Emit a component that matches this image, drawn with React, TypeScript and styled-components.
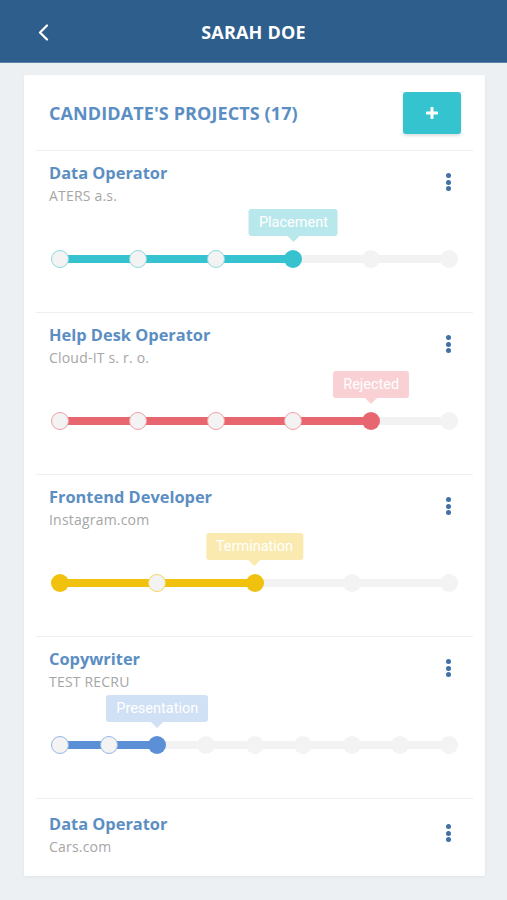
import React from "react";
import styled, { createGlobalStyle } from "styled-components";

const Global = createGlobalStyle`
  html, body { margin: 0; padding: 0; }
  body {
    background: #edf0f3;
    font-family: "Open Sans", "Noto Sans", sans-serif;
    -webkit-font-smoothing: antialiased;
  }
  * { box-sizing: border-box; }
`;

const Page = styled.div`
  min-height: 900px;
  background: #edf0f3;
  display: flex;
  flex-direction: column;
`;

const TopBar = styled.header`
  height: 63px;
  background: #2e5e8b;
  border-bottom: 1px solid #5a83ab;
  display: flex;
  align-items: center;
  justify-content: center;
  position: relative;
`;

const BackButton = styled.button`
  position: absolute;
  left: 30px;
  top: 18px;
  width: 26px;
  height: 28px;
  border: 0;
  background: transparent;
  padding: 0;
  display: flex;
  align-items: center;
  justify-content: center;
  cursor: pointer;
`;

const TopTitle = styled.h1`
  margin: 0;
  color: #ffffff;
  font-size: 18px;
  font-weight: 700;
  letter-spacing: 0.2px;
  line-height: 1;
  padding-top: 2px;
`;

const Card = styled.section`
  margin: 12px 22px 23px 24px;
  background: #ffffff;
  border-radius: 2px;
  box-shadow: 0 1px 3px rgba(40, 60, 90, 0.06);
  display: flex;
  flex-direction: column;
`;

const CardHead = styled.div`
  height: 75px;
  display: flex;
  align-items: center;
  justify-content: space-between;
  padding: 0 24px 0 25px;
`;

const CardTitle = styled.h2`
  margin: 0;
  font-size: 18px;
  font-weight: 700;
  color: #5b8ec2;
  letter-spacing: 0.1px;
  padding-top: 1px;
`;

const AddButton = styled.button`
  width: 58px;
  height: 42px;
  margin-top: 1px;
  border: 0;
  border-radius: 3px;
  background: #35c3cf;
  box-shadow: 0 2px 3px rgba(0, 0, 0, 0.12);
  display: flex;
  align-items: center;
  justify-content: center;
  cursor: pointer;
`;

const Item = styled.article<{ $last?: boolean }>`
  margin: 0 12px;
  border-top: 1px solid #eeeff1;
  padding: ${(p) => (p.$last ? "15px 0 20px 13px" : "12px 0 44px 13px")};
  display: flex;
  flex-direction: column;
`;

const ItemHead = styled.div`
  display: flex;
  align-items: center;
  justify-content: space-between;
`;

const ItemText = styled.div`
  display: flex;
  flex-direction: column;
`;

const ItemTitle = styled.div`
  font-size: 16.4px;
  font-weight: 700;
  line-height: 20px;
  color: #5b8ec2;
`;

const ItemSub = styled.div`
  margin-top: 4px;
  font-size: 14px;
  line-height: 18px;
  color: #a6a6a6;
  letter-spacing: 0.2px;
`;

const Kebab = styled.button`
  margin-right: 22px;
  margin-top: -4px;
  border: 0;
  background: transparent;
  padding: 0;
  display: flex;
  flex-direction: column;
  gap: 1.5px;
  cursor: pointer;
`;

const Dot = styled.span`
  width: 5px;
  height: 5px;
  border-radius: 50%;
  background: #3f71a7;
`;

const TrackWrap = styled.div`
  position: relative;
  margin: 5px 15px 0 2px;
  padding-top: 40px;
`;

const Rail = styled.div`
  position: relative;
  height: 18px;
  display: flex;
  justify-content: space-between;
  align-items: center;
  &::before {
    content: "";
    position: absolute;
    left: 9px;
    right: 9px;
    top: 5px;
    height: 8px;
    background: #f2f2f2;
  }
`;

const Fill = styled.div<{ $color: string }>`
  position: absolute;
  left: 9px;
  top: 5px;
  height: 8px;
  background: ${(p) => p.$color};
`;

type NodeState = "done" | "filled" | "active" | "todo";

const Node = styled.span<{ $state: NodeState; $color: string; $ring: string }>`
  position: relative;
  z-index: 1;
  width: 18px;
  height: 18px;
  border-radius: 50%;
  background: ${(p) =>
    p.$state === "active" || p.$state === "filled" ? p.$color : "#f3f3f3"};
  border: ${(p) => (p.$state === "done" ? `1.7px solid ${p.$ring}` : "0")};
`;

const Tip = styled.div<{ $bg: string }>`
  position: absolute;
  top: -1px;
  transform: translateX(-50%);
  height: 27px;
  padding: 0 10px;
  border-radius: 3px;
  background: ${(p) => p.$bg};
  color: #ffffff;
  font-family: Roboto, "Noto Sans", sans-serif;
  font-size: 14.5px;
  line-height: 27px;
  white-space: nowrap;
  &::after {
    content: "";
    position: absolute;
    left: 50%;
    bottom: -6px;
    margin-left: -6px;
    border-left: 6px solid transparent;
    border-right: 6px solid transparent;
    border-top: 6px solid ${(p) => p.$bg};
  }
`;

type Theme = { main: string; ring: string; tip: string };

const themes: Record<string, Theme> = {
  teal: { main: "#36c2cf", ring: "#8fd9df", tip: "#b9e8ec" },
  red: { main: "#e8666f", ring: "#f0a0a6", tip: "#f9d1d4" },
  yellow: { main: "#f0c10d", ring: "#f4d463", tip: "#fbeab0" },
  blue: { main: "#5b8fd6", ring: "#96b7e6", tip: "#d0e0f5" },
};

type Project = {
  title: string;
  company: string;
  track?: {
    theme: keyof typeof themes;
    steps: number;
    active: number;
    filledFirst?: boolean;
    label: string;
  };
};

const projects: Project[] = [
  {
    title: "Data Operator",
    company: "ATERS a.s.",
    track: { theme: "teal", steps: 6, active: 3, label: "Placement" },
  },
  {
    title: "Help Desk Operator",
    company: "Cloud-IT s. r. o.",
    track: { theme: "red", steps: 6, active: 4, label: "Rejected" },
  },
  {
    title: "Frontend Developer",
    company: "Instagram.com",
    track: { theme: "yellow", steps: 5, active: 2, filledFirst: true, label: "Termination" },
  },
  {
    title: "Copywriter",
    company: "TEST RECRU",
    track: { theme: "blue", steps: 9, active: 2, label: "Presentation" },
  },
  { title: "Data Operator", company: "Cars.com" },
];

function Progress({ t }: { t: NonNullable<Project["track"]> }) {
  const th = themes[t.theme];
  const frac = t.active / (t.steps - 1);
  const pos = `calc(9px + (100% - 18px) * ${frac})`;
  return (
    <TrackWrap>
      <Tip $bg={th.tip} style={{ left: pos }}>
        {t.label}
      </Tip>
      <Rail>
        <Fill $color={th.main} style={{ width: `calc((100% - 18px) * ${frac})` }} />
        {Array.from({ length: t.steps }).map((_, i) => {
          let st: NodeState = "todo";
          if (i === t.active) st = "active";
          else if (i < t.active) st = i === 0 && t.filledFirst ? "filled" : "done";
          return <Node key={i} $state={st} $color={th.main} $ring={th.ring} />;
        })}
      </Rail>
    </TrackWrap>
  );
}

export default function App() {
  return (
    <>
      <Global />
      <Page>
        <TopBar>
          <BackButton aria-label="Back">
            <svg width="12" height="17" viewBox="0 0 12 17" fill="none">
              <polyline
                points="10,1.5 3,8.5 10,15.5"
                stroke="#ffffff"
                strokeWidth="2.2"
                strokeLinecap="round"
                strokeLinejoin="round"
              />
            </svg>
          </BackButton>
          <TopTitle>SARAH DOE</TopTitle>
        </TopBar>
        <Card>
          <CardHead>
            <CardTitle>CANDIDATE'S PROJECTS (17)</CardTitle>
            <AddButton aria-label="Add project">
              <svg width="12" height="12" viewBox="0 0 12 12">
                <path d="M6 1v10M1 6h10" stroke="#ffffff" strokeWidth="3" strokeLinecap="round" />
              </svg>
            </AddButton>
          </CardHead>
          {projects.map((p, i) => (
            <Item key={i} $last={!p.track}>
              <ItemHead>
                <ItemText>
                  <ItemTitle>{p.title}</ItemTitle>
                  <ItemSub>{p.company}</ItemSub>
                </ItemText>
                <Kebab aria-label="More">
                  <Dot />
                  <Dot />
                  <Dot />
                </Kebab>
              </ItemHead>
              {p.track && <Progress t={p.track} />}
            </Item>
          ))}
        </Card>
      </Page>
    </>
  );
}
